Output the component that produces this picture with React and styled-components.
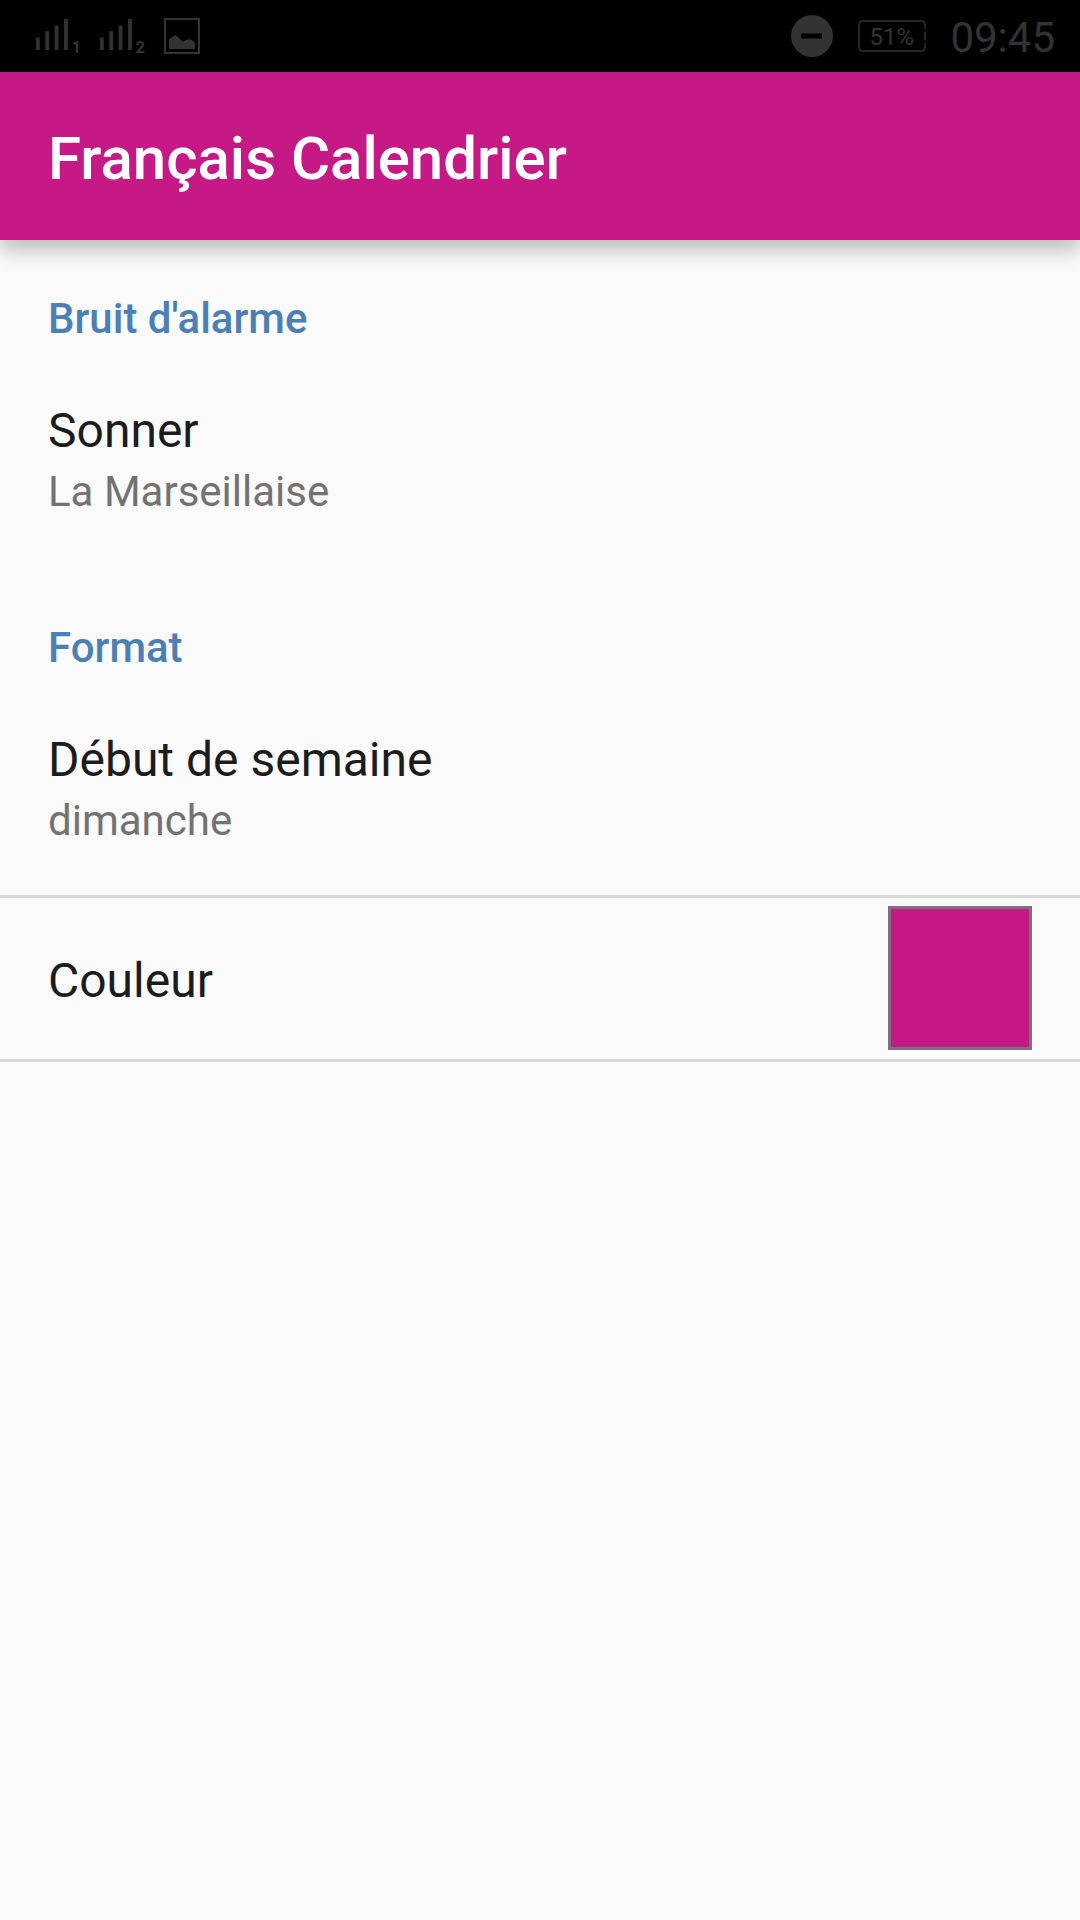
import React, { useState } from "react";
import styled, { createGlobalStyle } from "styled-components";

const GlobalStyle = createGlobalStyle`
  * { box-sizing: border-box; }
  body {
    margin: 0;
    background: #fafafa;
    font-family: Roboto, "Liberation Sans", sans-serif;
  }
`;

const Screen = styled.div`
  min-height: 100vh;
  background: #fafafa;
`;

const StatusBar = styled.div`
  display: flex;
  align-items: center;
  justify-content: space-between;
  height: 72px;
  padding: 0 25px 0 36px;
  background: #000;
  color: #333;
`;

const StatusGroup = styled.div`
  display: flex;
  align-items: center;
  gap: ${(p) => p.$gap}px;
`;

const Signal = styled.div`
  display: flex;
  align-items: flex-end;
  gap: 4px;
  width: 45px;
  height: 38px;
  font-size: 16px;
  line-height: 14px;
  font-weight: 700;

  svg { margin-bottom: 4px; }
`;

const Battery = styled.div`
  position: relative;
  display: flex;
  align-items: center;
  width: 68px;
  height: 32px;
  padding: 2px 0 0 11px;
  font-size: 24px;
  line-height: 28px;

  svg {
    position: absolute;
    inset: 0;
    color: #262626;
  }
`;

const Clock = styled.time`
  padding-top: 3px;
  font-size: 42px;
  line-height: 48px;
`;

const AppBar = styled.header`
  position: relative;
  display: flex;
  align-items: center;
  min-height: 168px;
  padding: 6px 48px 0;
  background: #c51a85;
  box-shadow: 0 10px 20px rgba(0, 0, 0, 0.26);
`;

const AppTitle = styled.h1`
  margin: 0;
  color: #fff;
  font-size: 60px;
  line-height: 72px;
  font-weight: 500;
`;

const Preferences = styled.main`
  display: flex;
  flex-direction: column;
`;

const Section = styled.section`
  & + & { margin-top: 3px; }
`;

const SectionTitle = styled.h2`
  margin: 0;
  padding: 55px 48px 12px;
  color: #4c80b4;
  font-size: 42px;
  line-height: 48px;
  font-weight: 500;
`;

const Preference = styled.button`
  display: flex;
  flex-direction: column;
  gap: 9px;
  width: 100%;
  padding: 48px 48px 50px;
  border: 0;
  background: none;
  font-family: inherit;
  text-align: left;
  cursor: pointer;
`;

const PreferenceTitle = styled.span`
  color: #1c1c1c;
  font-size: 48px;
  line-height: 56px;
`;

const PreferenceSummary = styled.span`
  color: #727272;
  font-size: 42px;
  line-height: 48px;
`;

const ColorPreference = styled.label`
  display: flex;
  align-items: center;
  justify-content: space-between;
  padding: 8px 48px 9px;
  border: solid #dadada;
  border-width: 3px 0;
  cursor: pointer;

  ${PreferenceTitle} { padding-top: 6px; }
`;

const Swatch = styled.input`
  appearance: none;
  width: 144px;
  height: 144px;
  padding: 0;
  border: 3px solid #80707f;
  background: none;
  cursor: pointer;

  &::-webkit-color-swatch-wrapper { padding: 0; }
  &::-webkit-color-swatch { border: 0; border-radius: 0; }
`;

function SignalIcon({ sim }) {
  return (
    <Signal>
      <svg width="34" height="33" viewBox="0 0 34 33" fill="currentColor">
        <path d="M0 20h4v13H0zM10 13h4v20h-4zM20 7h4v26h-4zM30 0h4v33h-4z" />
      </svg>
      <span>{sim}</span>
    </Signal>
  );
}

function PictureIcon() {
  return (
    <svg width="36" height="36" viewBox="0 0 36 36">
      <rect x="1" y="1" width="34" height="34" fill="none" stroke="currentColor" strokeWidth="2" />
      <path d="M5 31V21L7 20L11 17L14 19L19 24L22 22L25 21L28 22L31 25V31Z" fill="currentColor" />
    </svg>
  );
}

function DoNotDisturbIcon() {
  return (
    <svg width="44" height="44" viewBox="0 0 44 44">
      <circle cx="22" cy="22" r="21" fill="currentColor" />
      <path d="M11 22H32" stroke="#000" strokeWidth="5" />
    </svg>
  );
}

function PreferenceItem({ title, summary }) {
  return (
    <Preference type="button">
      <PreferenceTitle>{title}</PreferenceTitle>
      <PreferenceSummary>{summary}</PreferenceSummary>
    </Preference>
  );
}

export default function App() {
  const [color, setColor] = useState("#c51a85");

  return (
    <Screen>
      <GlobalStyle />
      <StatusBar>
        <StatusGroup $gap={19}>
          <SignalIcon sim="1" />
          <SignalIcon sim="2" />
          <PictureIcon />
        </StatusGroup>
        <StatusGroup $gap={24}>
          <DoNotDisturbIcon />
          <Battery>
            <svg width="68" height="32" viewBox="0 0 68 32" fill="none" stroke="currentColor" strokeWidth="2">
              <path d="M67 9V5Q67 1 63 1H5Q1 1 1 5V27Q1 31 5 31H63Q67 31 67 27V23M67 12V20" />
            </svg>
            51%
          </Battery>
          <Clock>09:45</Clock>
        </StatusGroup>
      </StatusBar>
      <AppBar>
        <AppTitle>Français Calendrier</AppTitle>
      </AppBar>
      <Preferences>
        <Section>
          <SectionTitle>Bruit d'alarme</SectionTitle>
          <PreferenceItem title="Sonner" summary="La Marseillaise" />
        </Section>
        <Section>
          <SectionTitle>Format</SectionTitle>
          <PreferenceItem title="Début de semaine" summary="dimanche" />
          <ColorPreference>
            <PreferenceTitle>Couleur</PreferenceTitle>
            <Swatch type="color" value={color} onChange={(e) => setColor(e.target.value)} />
          </ColorPreference>
        </Section>
      </Preferences>
    </Screen>
  );
}
